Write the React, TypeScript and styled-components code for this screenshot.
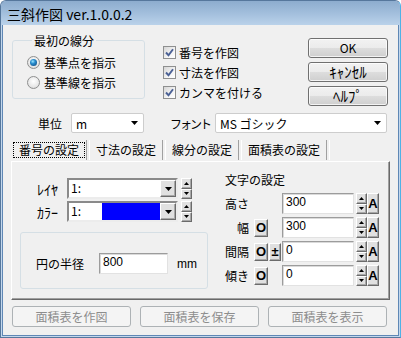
import React from "react";
import styled, { createGlobalStyle } from "styled-components";

const UI = `"Noto Sans CJK JP", "Noto Sans", sans-serif`;

const GlobalStyle = createGlobalStyle`
  html, body { margin: 0; padding: 0; background: #ffffff; }
  body { font-family: ${UI}; font-size: 12px; color: #000; }
  * { box-sizing: border-box; }
`;

const Window = styled.div`
  width: 401px;
  height: 338px;
  display: flex;
  flex-direction: column;
  background: #c3d7ec;
  border: 1px solid #56779c;
  border-right-color: #4fb2e6;
  border-radius: 6px 6px 0 0;
  padding: 0 1px 1px 1px;
  overflow: hidden;
`;

const TitleBar = styled.div`
  height: 24px;
  margin: 0 -1px;
  padding: 2px 0 0 6px;
  display: flex;
  align-items: center;
  background: linear-gradient(to bottom, #8dacce 0%, #a2bedc 50%, #bad2ea 100%);
  font-size: 14px;
  color: #000;
`;

const Client = styled.div`
  flex: 1;
  display: flex;
  flex-direction: column;
  background: #f0f0f0;
  border: 1px solid #5f87b5;
  border-top: none;
  padding-top: 8px;
`;

const TopRow = styled.div`
  display: flex;
  align-items: flex-start;
  padding: 0 10px 0 9px;
`;

const GroupBox = styled.fieldset`
  margin: 0;
  width: 133px;
  padding: 4px 0 6px 14px;
  border: 1px solid #d5dfe5;
  border-radius: 3px;
  display: flex;
  flex-direction: column;
  min-width: 0;
`;

const Legend = styled.legend`
  margin-left: 5px;
  padding: 0 2px;
  font-size: 12px;
  line-height: 15px;
`;

const OptionRow = styled.label`
  display: flex;
  align-items: center;
  gap: 4px;
  height: 20px;
  font-size: 12px;
  white-space: nowrap;
`;

const Radio = styled.span<{ $checked?: boolean }>`
  width: 13px;
  height: 13px;
  border-radius: 50%;
  border: 1px solid #8e8f8f;
  background: radial-gradient(circle at 50% 40%, #ffffff 0%, #e8e8e8 60%, #d0d0d0 100%);
  display: flex;
  align-items: center;
  justify-content: center;
  flex: none;
  &::after {
    content: "";
    width: 7px;
    height: 7px;
    border-radius: 50%;
    display: ${(p) => (p.$checked ? "block" : "none")};
    background: radial-gradient(circle at 40% 35%, #9ee6ff 0%, #2a8fd0 35%, #0c3f74 100%);
  }
`;

const CheckList = styled.div`
  display: flex;
  flex-direction: column;
  margin: 9px 0 0 18px;
`;

const CheckRow = styled.label`
  display: flex;
  align-items: center;
  gap: 3px;
  height: 20px;
  font-size: 12px;
  white-space: nowrap;
`;

const CheckBox = styled.span`
  width: 13px;
  height: 13px;
  border: 1px solid #8e8f8f;
  background: linear-gradient(135deg, #d6d6d6 0%, #f4f4f4 60%, #ffffff 100%);
  display: flex;
  align-items: center;
  justify-content: center;
  flex: none;
`;

const ButtonCol = styled.div`
  margin: 5px 0 0 auto;
  display: flex;
  flex-direction: column;
  gap: 4px;
`;

const PushButton = styled.button<{ $size?: number }>`
  width: 80px;
  height: 20px;
  padding: 0;
  border: 1px solid #707070;
  border-radius: 3px;
  background: linear-gradient(to bottom, #f2f2f2 0%, #ebebeb 50%, #dddddd 51%, #cfcfcf 100%);
  box-shadow: inset 0 0 0 1px rgba(255, 255, 255, 0.75);
  font-family: ${UI};
  font-size: ${(p) => p.$size ?? 12}px;
  line-height: 16px;
  color: #000;
`;

const SettingsRow = styled.div`
  display: flex;
  align-items: center;
  height: 20px;
  margin-top: 7px;
  padding-left: 35px;
`;

const RowLabel = styled.span<{ $w: number; $tight?: boolean; $ml?: number; $size?: number }>`
  width: ${(p) => p.$w}px;
  margin-left: ${(p) => p.$ml ?? 0}px;
  flex: none;
  font-size: ${(p) => p.$size ?? 12}px;
  white-space: nowrap;
  letter-spacing: ${(p) => (p.$tight ? "-2px" : "0")};
`;

const Select = styled.div<{ $w: number; $ml: number }>`
  width: ${(p) => p.$w}px;
  margin-left: ${(p) => p.$ml}px;
  height: 20px;
  background: #fff;
  border: 1px solid #cdcdcd;
  border-radius: 2px;
  display: flex;
  align-items: center;
  padding: 0 5px 0 4px;
  font-size: 12px;
  flex: none;
`;

const SelectText = styled.span`
  flex: 1;
  white-space: nowrap;
`;

const TabStrip = styled.div`
  display: flex;
  align-items: center;
  height: 23px;
  margin-top: 5px;
  padding-left: 9px;
`;

const Tab = styled.div`
  display: flex;
  align-items: center;
  height: 22px;
  padding-left: 1px;
  gap: 1px;
  &::after {
    content: "";
    width: 2px;
    height: 20px;
    border-left: 1px solid #a0a0a0;
    border-right: 1px solid #ffffff;
  }
`;

const TabLabel = styled.span<{ $active?: boolean }>`
  padding: 0 ${(p) => (p.$active ? 5 : 4)}px;
  border: 1px dotted ${(p) => (p.$active ? "#000" : "transparent")};
  line-height: 14px;
  font-size: 12px;
  white-space: nowrap;
`;

const Panel = styled.div`
  margin-left: 8px;
  width: 379px;
  height: 139px;
  border-top: 1px solid #ffffff;
  border-left: 1px solid #ffffff;
  border-right: 1px solid #696969;
  border-bottom: 1px solid #696969;
  box-shadow: inset -1px -1px 0 #a0a0a0;
  display: flex;
  padding-left: 8px;
`;

const LeftCol = styled.div`
  width: 187px;
  padding-top: 16px;
  display: flex;
  flex-direction: column;
`;

const ComboStack = styled.div`
  display: flex;
  flex-direction: column;
  gap: 2px;
  padding-left: 17px;
`;

const ComboRow = styled.div`
  display: flex;
  align-items: center;
  height: 21px;
`;

const Combo = styled.div`
  width: 111px;
  height: 21px;
  background: #fff;
  border: 2px solid;
  border-color: #8a8a8a #ececec #ececec #8a8a8a;
  display: flex;
  align-items: center;
  font-size: 12px;
`;

const ComboText = styled.span`
  width: 33px;
  padding-left: 2px;
  line-height: 15px;
  align-self: flex-start;
`;

const Swatch = styled.span<{ $color: string }>`
  width: 58px;
  height: 17px;
  background: ${(p) => p.$color};
`;

const RaisedBox = styled.span`
  display: flex;
  align-items: center;
  justify-content: center;
  background: #e0e0e0;
  border: 1px solid;
  border-color: #ffffff #6b6b6b #6b6b6b #ffffff;
  box-shadow: inset -1px -1px 0 #a8a8a8;
  flex: none;
`;

const DropBtn = styled(RaisedBox)`
  width: 16px;
  height: 17px;
  margin-left: auto;
`;

const Spinner = styled.div<{ $ml: number }>`
  width: 11px;
  height: 21px;
  margin-left: ${(p) => p.$ml}px;
  display: flex;
  flex-direction: column;
  flex: none;
`;

const SpinHalf = styled(RaisedBox)`
  flex: 1;
  width: 11px;
`;

const InnerGroup = styled.div`
  margin-top: 10px;
  width: 188px;
  height: 57px;
  border: 1px solid #d5dfe5;
  border-radius: 3px;
  padding: 20px 0 0 15px;
  display: flex;
  align-items: flex-start;
`;

const FieldRow = styled.div`
  display: flex;
  align-items: center;
  height: 21px;
`;

const NumField = styled.div<{ $w: number }>`
  width: ${(p) => p.$w}px;
  height: 21px;
  background: #fff;
  border: 1px solid;
  border-color: #9c9c9c #e2e2e2 #e2e2e2 #9c9c9c;
  box-shadow: inset 1px 1px 0 #dadada;
  padding: 1px 0 0 3px;
  font-family: "Liberation Sans", Arial, sans-serif;
  font-size: 12px;
  line-height: 14px;
  flex: none;
`;

const UnitText = styled.span`
  margin-left: 9px;
  font-size: 12px;
  font-family: "Liberation Sans", Arial, sans-serif;
`;

const RightCol = styled.div`
  margin-left: 18px;
  padding-top: 10px;
  display: flex;
  flex-direction: column;
`;

const SectionTitle = styled.div`
  height: 16px;
  line-height: 16px;
  font-size: 12px;
  margin-bottom: 5px;
`;

const ParamList = styled.div`
  display: flex;
  flex-direction: column;
  gap: 3px;
`;

const ParamLabel = styled.span`
  width: 24px;
  text-align: right;
  font-size: 12px;
  white-space: nowrap;
  flex: none;
`;

const ButtonSlot = styled.div`
  width: 28px;
  margin-left: 5px;
  display: flex;
  align-items: center;
  gap: 1px;
  flex: none;
`;

const SmallBtn = styled(RaisedBox)<{ $w: number }>`
  width: ${(p) => p.$w}px;
  height: 18px;
  font-family: "Liberation Sans", Arial, sans-serif;
  font-weight: bold;
  font-size: 13px;
  line-height: 1;
`;

const ABtn = styled(RaisedBox)`
  width: 12px;
  height: 21px;
  font-family: "Liberation Sans", Arial, sans-serif;
  font-weight: bold;
  font-size: 13px;
  line-height: 1;
`;

const BottomBar = styled.div`
  display: flex;
  gap: 9px;
  margin-top: 6px;
  padding-left: 9px;
`;

const DisabledButton = styled.button`
  width: 119px;
  height: 21px;
  padding: 0;
  border: 1px solid #adb2b5;
  border-radius: 3px;
  background: #f4f4f4;
  color: #8d8d8d;
  font-family: ${UI};
  font-size: 12px;
`;

const Tri = ({ up, w = 7, h = 4 }: { up?: boolean; w?: number; h?: number }) => (
  <svg width={w} height={h} viewBox={`0 0 ${w} ${h}`}>
    <polygon
      points={up ? `0,${h} ${w},${h} ${w / 2},0` : `0,0 ${w},0 ${w / 2},${h}`}
      fill="#000"
    />
  </svg>
);

const Check = () => (
  <svg width="9" height="9" viewBox="0 0 9 9">
    <path d="M1 4.5 L3.5 7.2 L8 1.2" fill="none" stroke="#4b6195" strokeWidth="1.9" />
  </svg>
);

const Spin = ({ ml }: { ml: number }) => (
  <Spinner $ml={ml}>
    <SpinHalf>
      <Tri up w={5} h={3} />
    </SpinHalf>
    <SpinHalf>
      <Tri w={5} h={3} />
    </SpinHalf>
  </Spinner>
);

const params: { label: string; value: string; o?: boolean; pm?: boolean }[] = [
  { label: "高さ", value: "300" },
  { label: "幅", value: "300", o: true },
  { label: "間隔", value: "0", o: true, pm: true },
  { label: "傾き", value: "0", o: true },
];

const tabs = ["番号の設定", "寸法の設定", "線分の設定", "面積表の設定"];

export default function App() {
  return (
    <>
      <GlobalStyle />
      <Window>
        <TitleBar>三斜作図 ver.1.0.0.2</TitleBar>
        <Client>
          <TopRow>
            <GroupBox>
              <Legend>最初の線分</Legend>
              <OptionRow>
                <Radio $checked />
                基準点を指示
              </OptionRow>
              <OptionRow>
                <Radio />
                基準線を指示
              </OptionRow>
            </GroupBox>
            <CheckList>
              {["番号を作図", "寸法を作図", "カンマを付ける"].map((t) => (
                <CheckRow key={t}>
                  <CheckBox>
                    <Check />
                  </CheckBox>
                  {t}
                </CheckRow>
              ))}
            </CheckList>
            <ButtonCol>
              <PushButton>OK</PushButton>
              <PushButton $size={15}>ｷｬﾝｾﾙ</PushButton>
              <PushButton $size={15}>ﾍﾙﾌﾟ</PushButton>
            </ButtonCol>
          </TopRow>

          <SettingsRow>
            <RowLabel $w={24}>単位</RowLabel>
            <Select $w={73} $ml={9}>
              <SelectText>m</SelectText>
              <Tri />
            </Select>
            <RowLabel $w={40} $tight $ml={26}>
              フォント
            </RowLabel>
            <Select $w={172} $ml={5}>
              <SelectText>MS ゴシック</SelectText>
              <Tri />
            </Select>
          </SettingsRow>

          <TabStrip>
            {tabs.map((t, i) => (
              <Tab key={t}>
                <TabLabel $active={i === 0}>{t}</TabLabel>
              </Tab>
            ))}
          </TabStrip>

          <Panel>
            <LeftCol>
              <ComboStack>
                <ComboRow>
                  <RowLabel $w={30} $size={14}>ﾚｲﾔ</RowLabel>
                  <Combo>
                    <ComboText>1:</ComboText>
                    <DropBtn>
                      <Tri />
                    </DropBtn>
                  </Combo>
                  <Spin ml={3} />
                </ComboRow>
                <ComboRow>
                  <RowLabel $w={30} $size={14}>ｶﾗｰ</RowLabel>
                  <Combo>
                    <ComboText>1:</ComboText>
                    <Swatch $color="#0000ff" />
                    <DropBtn>
                      <Tri />
                    </DropBtn>
                  </Combo>
                  <Spin ml={3} />
                </ComboRow>
              </ComboStack>
              <InnerGroup>
                <FieldRow>
                  <RowLabel $w={63}>円の半径</RowLabel>
                  <NumField $w={69}>800</NumField>
                  <UnitText>mm</UnitText>
                </FieldRow>
              </InnerGroup>
            </LeftCol>

            <RightCol>
              <SectionTitle>文字の設定</SectionTitle>
              <ParamList>
                {params.map((p) => (
                  <FieldRow key={p.label}>
                    <ParamLabel>{p.label}</ParamLabel>
                    <ButtonSlot>
                      {p.o && <SmallBtn $w={14}>O</SmallBtn>}
                      {p.pm && <SmallBtn $w={12}>±</SmallBtn>}
                    </ButtonSlot>
                    <NumField $w={72}>{p.value}</NumField>
                    <Spin ml={2} />
                    <ABtn>A</ABtn>
                  </FieldRow>
                ))}
              </ParamList>
            </RightCol>
          </Panel>

          <BottomBar>
            <DisabledButton disabled>面積表を作図</DisabledButton>
            <DisabledButton disabled>面積表を保存</DisabledButton>
            <DisabledButton disabled>面積表を表示</DisabledButton>
          </BottomBar>
        </Client>
      </Window>
    </>
  );
}
